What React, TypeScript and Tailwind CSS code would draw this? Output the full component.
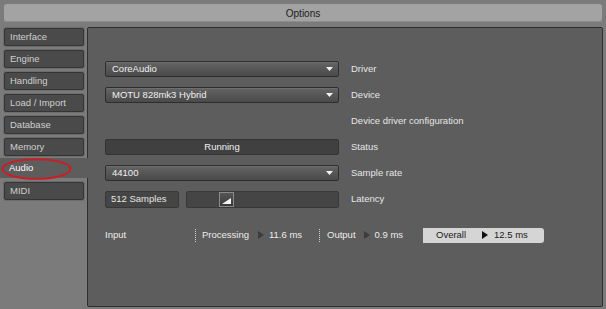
import React from "react";

const font = { fontFamily: '"Liberation Sans", Arial, sans-serif' };

const tabs = ["Interface", "Engine", "Handling", "Load / Import", "Database", "Memory", "Audio", "MIDI"];

const DownArrow = () => (
  <svg width="7" height="4" viewBox="0 0 7 4" className="shrink-0">
    <path d="M0 0h7L3.5 4z" fill="#f2f2f2" />
  </svg>
);

const Play = ({ color }: { color: string }) => (
  <svg width="6" height="8" viewBox="0 0 6 8" className="shrink-0">
    <path d="M0 0l6 4-6 4z" fill={color} />
  </svg>
);

const Dropdown = ({ value }: { value: string }) => (
  <div className="flex h-[16px] w-[234px] items-center justify-between rounded-[2px] border border-[#2e2e2e] bg-gradient-to-b from-[#646464] to-[#4a4a4a] pl-[6px] pr-[5px] text-[#f0f0f0] shadow-[inset_0_1px_0_#6e6e6e]">
    <span>{value}</span>
    <DownArrow />
  </div>
);

const Row = ({ children, label }: { children?: React.ReactNode; label: string }) => (
  <div className="flex h-[16px] items-center">
    <div className="flex w-[234px] shrink-0">{children}</div>
    <span className="ml-[12px] text-[#e6e6e6]">{label}</span>
  </div>
);

const Separator = () => <div className="h-[13px] border-l border-dotted border-[#d0d0d0]" />;

export default function App() {
  return (
    <div className="flex h-[309px] w-[606px] flex-col bg-[#7b7b7b] text-[9.5px]" style={font}>
      <div className="mx-[4px] mt-[4px] flex h-[18px] items-center justify-center rounded-[3px] bg-[#a3a3a3] text-[10px] text-[#1c1c1c] shadow-[inset_0_-1px_0_#8e8e8e]">
        Options
      </div>

      <div className="mt-[5px] flex flex-1 pb-[2px]">
        <div className="relative flex w-[87px] shrink-0 flex-col gap-[4px] pt-[1px]">
          {tabs.map((t) =>
            t === "Audio" ? (
              <div
                key={t}
                className="relative z-10 -mt-[2px] -mr-[1px] flex h-[20px] items-center bg-[#5d5d5d] pl-[9px] text-white"
              >
                {t}
              </div>
            ) : (
              <div
                key={t}
                className="ml-[4px] flex h-[18px] w-[80px] items-center rounded-[2px] border border-[#353535] bg-[#4a4a4a] pl-[5px] text-[#cfcfcf] shadow-[0_0_0_1px_#6c6c6c]"
              >
                {t}
              </div>
            )
          )}
          <svg
            className="pointer-events-none absolute left-[1px] top-[131px] z-20"
            width="71"
            height="22"
            viewBox="0 0 71 22"
          >
            <ellipse cx="35.5" cy="11" rx="34" ry="9.8" fill="none" stroke="#c81f26" strokeWidth="2" />
          </svg>
        </div>

        <div className="mr-[3px] flex flex-1 flex-col rounded-[2px] border border-[#2f2f2f] bg-[#5d5d5d] pl-[17px] pt-[33px]">
          <div className="flex flex-col gap-[10px]">
            <Row label="Driver">
              <Dropdown value="CoreAudio" />
            </Row>
            <Row label="Device">
              <Dropdown value="MOTU 828mk3 Hybrid" />
            </Row>
            <Row label="Device driver configuration" />
            <Row label="Status">
              <div className="flex h-[16px] w-[234px] items-center justify-center rounded-[2px] border border-[#333] bg-[#404040] text-[#f2f2f2]">
                Running
              </div>
            </Row>
            <Row label="Sample rate">
              <Dropdown value="44100" />
            </Row>
            <div className="flex h-[17px] items-center">
              <div className="flex w-[234px] shrink-0 gap-[7px]">
                <div className="flex h-[17px] w-[74px] items-center rounded-[2px] border border-[#383838] bg-[#454545] pl-[5px] text-[#e6e6e6]">
                  512 Samples
                </div>
                <div className="flex h-[17px] flex-1 items-center rounded-[2px] border border-[#383838] bg-[#454545] pl-[32px]">
                  <div className="flex h-[15px] w-[15px] items-end justify-end border border-[#8a8a8a] bg-gradient-to-b from-[#555] to-[#3a3a3a] p-[2px]">
                    <svg width="9" height="6" viewBox="0 0 9 6">
                      <path d="M0 6L9 0v6z" fill="#f5f5f5" />
                    </svg>
                  </div>
                </div>
              </div>
              <span className="ml-[12px] text-[#e6e6e6]">Latency</span>
            </div>
          </div>

          <div className="mt-[19px] flex h-[16px] items-center text-[#ececec]">
            <span className="w-[90px] shrink-0">Input</span>
            <Separator />
            <div className="flex w-[123px] shrink-0 items-center pl-[6px]">
              <span>Processing</span>
              <span className="ml-[9px]">
                <Play color="#3c3c3c" />
              </span>
              <span className="ml-[5px]">11.6 ms</span>
            </div>
            <Separator />
            <div className="flex w-[103px] shrink-0 items-center pl-[7px]">
              <span>Output</span>
              <span className="ml-[8px]">
                <Play color="#3c3c3c" />
              </span>
              <span className="ml-[5px]">0.9 ms</span>
            </div>
            <div className="flex h-[15px] w-[121px] items-center rounded-r-[3px] bg-[#d5d5d5] pl-[13px] text-[#1a1a1a]">
              <span className="w-[46px]">Overall</span>
              <Play color="#111" />
              <span className="ml-[6px]">12.5 ms</span>
            </div>
          </div>
        </div>
      </div>
    </div>
  );
}
